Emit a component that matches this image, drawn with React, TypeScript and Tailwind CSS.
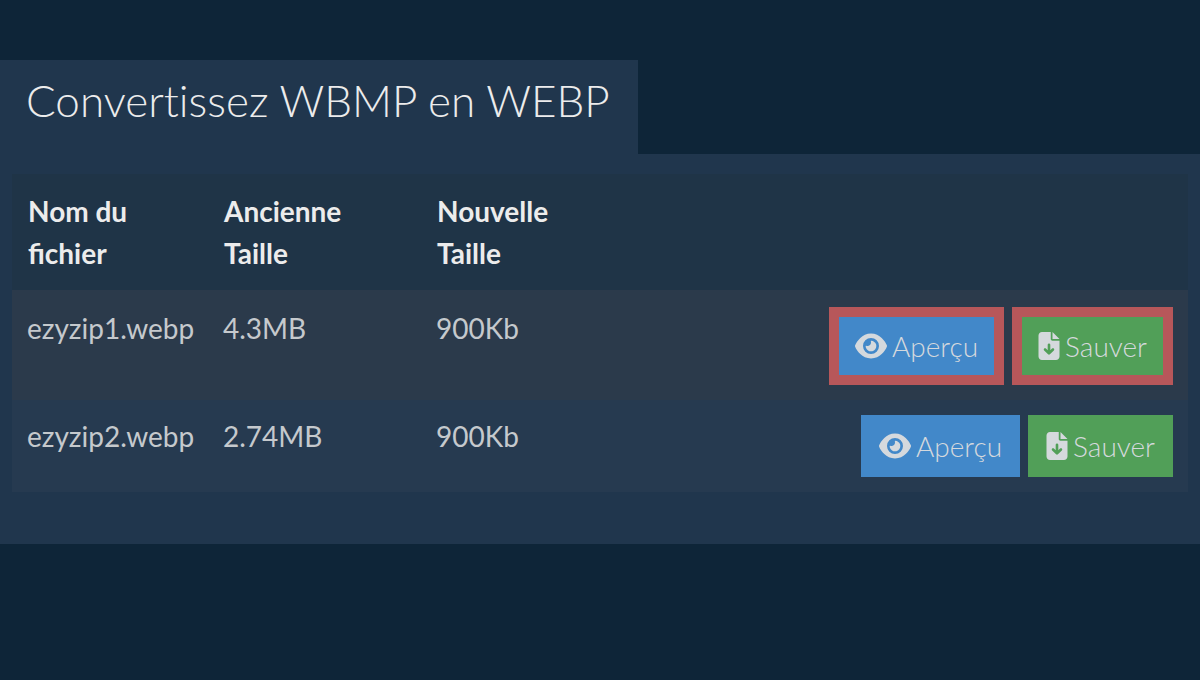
import { FaEye, FaFileArrowDown } from 'react-icons/fa6'

interface ConvertedFile {
  name: string
  oldSize: string
  newSize: string
  highlighted: boolean
}

const FILES: ConvertedFile[] = [
  { name: 'ezyzip1.webp', oldSize: '4.3MB', newSize: '900Kb', highlighted: true },
  { name: 'ezyzip2.webp', oldSize: '2.74MB', newSize: '900Kb', highlighted: false },
]

function FileActions({ highlighted }: { highlighted: boolean }) {
  const frame = highlighted ? 'border-[10px] border-[#b7575a] px-4 py-2' : 'px-[18px] py-[10px]'
  return (
    <div className="flex justify-end gap-2 font-light text-[#d5d9dd]">
      <button type="button" className={`flex items-center gap-[5px] bg-[#4288c9] ${frame}`}>
        <FaEye className="size-8" aria-hidden="true" />
        Aperçu
      </button>
      <button type="button" className={`flex items-center gap-[5px] bg-[#519f58] ${frame}`}>
        <FaFileArrowDown className="h-7 w-[22px]" aria-hidden="true" />
        Sauver
      </button>
    </div>
  )
}

function FileRow({ file }: { file: ConvertedFile }) {
  const cell = file.highlighted ? 'px-[15px] pb-[15px] pt-[17px]' : 'px-[15px] py-[15px]'
  return (
    <tr className={file.highlighted ? 'bg-[#2b3a4b]' : 'bg-[#263a50]'}>
      <td className={cell}>{file.name}</td>
      <td className={cell}>{file.oldSize}</td>
      <td className={cell}>{file.newSize}</td>
      <td className={cell}>
        <FileActions highlighted={file.highlighted} />
      </td>
    </tr>
  )
}

export default function App() {
  return (
    <main className="min-h-screen bg-[#0e2538] pt-[60px] font-[Lato,sans-serif] text-[#ececec]">
      <h1 className="w-fit bg-[#20364d] pb-6 pl-[26px] pr-7 pt-[10px] text-[44px] font-light leading-[60px] [font-variant-ligatures:none]">
        Convertissez WBMP en WEBP
      </h1>
      <section className="bg-[#20364d] px-3 pb-[52px] pt-5">
        <table className="w-full table-fixed border-collapse text-left text-[28px] leading-[42px]">
          <colgroup>
            <col className="w-[196px]" />
            <col className="w-[213px]" />
            <col className="w-[213px]" />
            <col />
          </colgroup>
          <thead className="bg-[#1f3447] align-top">
            <tr>
              <th className="px-4 py-4 font-bold">Nom du fichier</th>
              <th className="py-4 pl-4 pr-16 font-bold">Ancienne Taille</th>
              <th className="py-4 pl-4 pr-16 font-bold">Nouvelle Taille</th>
              <td />
            </tr>
          </thead>
          <tbody className="align-top text-[#c5c9cd]">
            {FILES.map(file => (
              <FileRow key={file.name} file={file} />
            ))}
          </tbody>
        </table>
      </section>
    </main>
  )
}
